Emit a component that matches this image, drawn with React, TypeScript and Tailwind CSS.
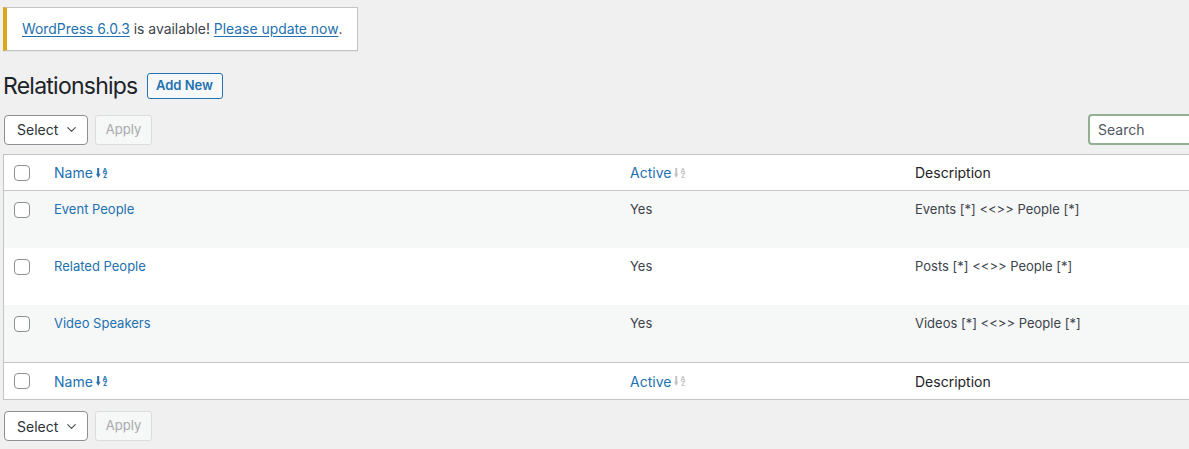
import { ChevronDown } from 'lucide-react';

type Relationship = { name: string; active: string; description: string };

const rows: Relationship[] = [
  { name: 'Event People', active: 'Yes', description: 'Events [*] <<>> People [*]' },
  { name: 'Related People', active: 'Yes', description: 'Posts [*] <<>> People [*]' },
  { name: 'Video Speakers', active: 'Yes', description: 'Videos [*] <<>> People [*]' },
];

// Down arrow with a stacked A/Z, used next to sortable column titles
function SortIcon({ active }: { active: boolean }) {
  const color = active ? '#2271b1' : '#c3c4c7';
  return (
    <svg width="13" height="12" viewBox="0 0 13 12" className="ml-[3px] shrink-0 overflow-visible">
      <path d="M2.2 1v6.5" stroke={color} strokeWidth="2" />
      <path d="M0 6.7h4.4L2.2 11.1z" fill={color} />
      <text x="9" y="5.5" fontSize="6.4" fontWeight="700" textAnchor="middle" fill={color} fontFamily="Inter, sans-serif">A</text>
      <text x="9" y="11.2" fontSize="6.4" fontWeight="700" textAnchor="middle" fill={color} fontFamily="Inter, sans-serif">Z</text>
    </svg>
  );
}

function Checkbox() {
  return <span className="block w-4 h-4 rounded-[4px] border border-[#8c8f94] bg-white" />;
}

function BulkActions() {
  return (
    <div className="flex items-center gap-[7px]">
      <div className="flex items-center justify-between w-[84px] h-[30px] rounded-[4px] border border-[#8c8f94] bg-white pl-[12px] pr-[8px] text-[14px] text-[#2c3338]">
        <span>Select</span>
        <ChevronDown size={15} strokeWidth={2} className="text-[#50575e]" />
      </div>
      <div className="flex items-center justify-center w-[57px] h-[30px] rounded-[3px] border border-[#dcdcde] bg-[#f6f7f7] text-[13px] text-[#a7aaad]">
        Apply
      </div>
    </div>
  );
}

function HeaderRow({ top }: { top: boolean }) {
  return (
    <div
      className={
        'grid grid-cols-[40px_576px_285px_1fr] items-center bg-white text-[14px] ' +
        (top ? 'h-[36px] border-b border-[#c3c4c7]' : 'h-[37px] border-t border-[#c3c4c7]')
      }
    >
      <div className="pl-[10px]">
        <Checkbox />
      </div>
      <div className="pl-[10px] flex items-center text-[#2271b1]">
        Name
        <SortIcon active />
      </div>
      <div className="pl-[10px] flex items-center text-[#2271b1]">
        Active
        <SortIcon active={false} />
      </div>
      <div className="pl-[10px] text-[#1d2327]">Description</div>
    </div>
  );
}

export default function App() {
  return (
    <div className="w-[1189px] h-[449px] overflow-hidden bg-[#f0f0f1] font-['Inter','Liberation_Sans',sans-serif] text-[13px] text-[#3c434a]">
      <div className="pl-[3px] pt-[7px]">
        {/* update notice */}
        <div className="w-[355px] h-[44px] flex items-center bg-white border border-[#c3c4c7] border-l-4 border-l-[#dba617] shadow-[0_1px_1px_rgba(0,0,0,0.04)] pl-[15px] text-[13.9px] text-[#3c434a]">
          <a className="text-[#2271b1] underline underline-offset-2">WordPress 6.0.3</a>
          <span>&nbsp;is available!&nbsp;</span>
          <a className="text-[#2271b1] underline underline-offset-2">Please update now</a>
          <span>.</span>
        </div>

        <div className="flex items-center mt-[22px] h-[26px]">
          <h1 className="text-[23px] font-normal tracking-[-0.033em] text-[#1d2327] leading-none">Relationships</h1>
          <span className="ml-[9px] flex items-center justify-center w-[76px] h-[26px] rounded-[3px] border border-[#2271b1] bg-[#f6f7f7] text-[13px] font-semibold text-[#2271b1]">
            Add New
          </span>
        </div>

        <div className="flex items-center justify-between mt-[15px] pl-px">
          <BulkActions />
          <div className="w-[110px] h-[31px] -mr-[9px] flex items-center rounded-[4px] border-2 border-[#93b093] bg-white pl-[8px] text-[14px] text-[#50575e]">
            Search
          </div>
        </div>

        {/* list table */}
        <div className="mt-[9px] w-[1200px] border border-[#c3c4c7] bg-white">
          <HeaderRow top />
          {rows.map((r, i) => (
            <div
              key={r.name}
              className={
                'grid grid-cols-[40px_576px_285px_1fr] h-[57px] pt-[10px] ' +
                (i % 2 === 0 ? 'bg-[#f6f7f7]' : 'bg-white')
              }
            >
              <div className="pl-[10px] pt-px">
                <Checkbox />
              </div>
              <div className="pl-[10px] text-[#2271b1] leading-[16px]">{r.name}</div>
              <div className="pl-[10px] leading-[16px]">{r.active}</div>
              <div className="pl-[10px] leading-[16px]">{r.description}</div>
            </div>
          ))}
          <HeaderRow top={false} />
        </div>

        <div className="mt-[11px] pl-px">
          <BulkActions />
        </div>
      </div>
    </div>
  );
}
